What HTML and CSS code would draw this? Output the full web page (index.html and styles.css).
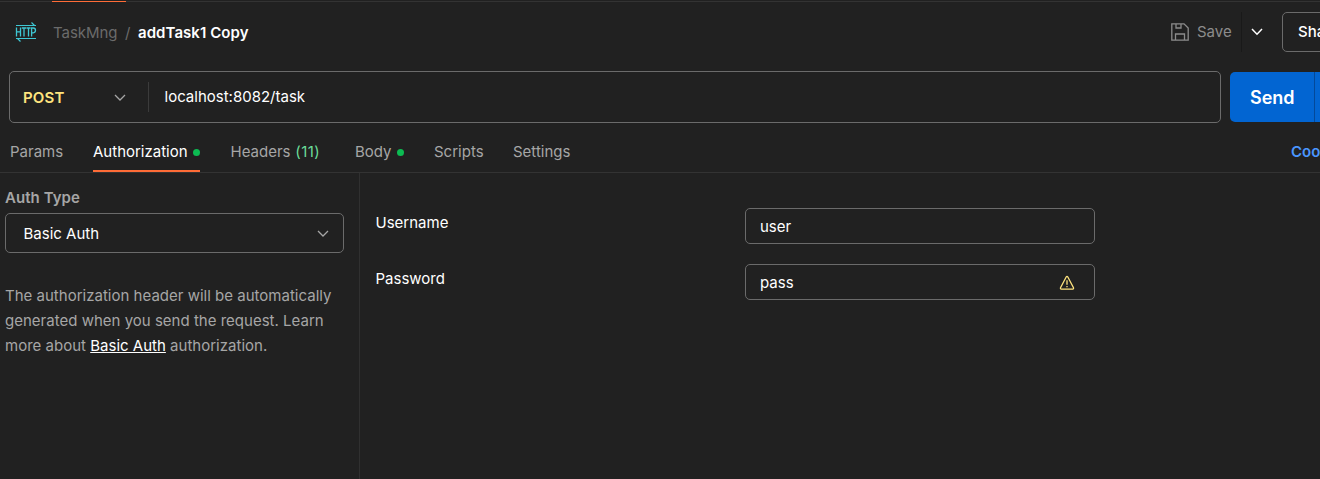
FILE: index.html
```
<!DOCTYPE html>
<html lang="en">
<head>
<meta charset="utf-8">
<title>addTask1 Copy</title>
<link rel="stylesheet" href="styles.css">
</head>
<body>
<div class="app">
  <div class="tabstrip"><span class="tabstrip-active"></span></div>
  <header class="header">
    <svg class="http-icon" width="22" height="20" viewBox="0 0 22 20" fill="none" stroke="#3ec8d4">
      <path d="M1 3.5H21M16.5 .5L19.5 3.5M1 16.5H21M5.5 19.5L2.5 16.5" stroke-width="1.2"/>
      <path d="M1.5 5.5V14.5M5.5 5.5V14.5M1.5 9.8H5.5M6.8 6H11.2M9 6V14.5M11.6 6H15.6M13.5 6V14.5M16.6 14.5V6H18.3Q20.5 6 20.5 8.3T18.3 10.8H16.6" stroke-width="1.3"/>
    </svg>
    <span class="crumb">TaskMng</span>
    <span class="slash">/</span>
    <span class="title">addTask1 Copy</span>
    <div class="actions">
      <svg class="save-icon" width="18" height="18" viewBox="0 0 18 18" fill="none" stroke="#8c8c8c" stroke-width="1.3">
        <path d="M.8 .8H13L17.2 5V17.2H.8ZM4.5 17V11H13.5V17M5 1V5H10V1"/>
      </svg>
      <span class="save">Save</span>
      <span class="save-caret"><svg width="12" height="8" viewBox="0 0 12 8" fill="none" stroke="#fff" stroke-width="1.5"><path d="M1 1L6 6.2L11 1"/></svg></span>
      <button class="share">Share</button>
    </div>
  </header>
  <div class="request">
    <div class="urlbar">
      <div class="method"><span>POST</span><svg width="12" height="8" viewBox="0 0 12 8" fill="none" stroke="#a6a6a6" stroke-width="1.3"><path d="M1 1L6 6L11 1"/></svg></div>
      <span class="url">localhost:8082/task</span>
    </div>
    <div class="send"><span class="send-label">Send</span><span class="send-more"></span></div>
  </div>
  <nav class="tabs">
    <span class="tab params">Params</span>
    <span class="tab active auth">Authorization<i class="dot"></i></span>
    <span class="tab headers">Headers <span class="count">(11)</span></span>
    <span class="tab bodytab">Body<i class="dot"></i></span>
    <span class="tab scripts">Scripts</span>
    <span class="tab">Settings</span>
    <span class="cookies">Cookies</span>
  </nav>
  <main class="main">
    <aside class="side">
      <div class="label">Auth Type</div>
      <div class="select"><span>Basic Auth</span><svg width="12" height="8" viewBox="0 0 12 8" fill="none" stroke="#a6a6a6" stroke-width="1.3"><path d="M1 1L6 6L11 1"/></svg></div>
      <p class="help">The authorization header will be automatically<br>generated when you send the request. Learn<br>more about <a class="link">Basic Auth</a> authorization.</p>
    </aside>
    <section class="form">
      <div class="row"><span class="name">Username</span><div class="field">user</div></div>
      <div class="row"><span class="name">Password</span><div class="field">pass
        <svg width="16" height="16" viewBox="0 0 16 16" fill="none" stroke="#ffe47e" stroke-width="1.3"><path d="M7.3 1.8Q8 .8 8.7 1.8L14.5 12.8Q14.8 14.1 13.7 14.2H2.3Q1.2 14.1 1.5 12.8ZM8 5.3V9.8M8 11V12.3"/></svg></div></div>
    </section>
  </main>
</div>
</body>
</html>
```
FILE: styles.css
```
* { box-sizing: border-box; }
body { margin: 0; background: #212121; color: #fff; font: 15px/20px Inter, "Liberation Sans", sans-serif; }
.app { width: 1320px; height: 479px; overflow: hidden; display: flex; flex-direction: column; white-space: nowrap; }
.tabstrip { height: 2px; flex: none; border-bottom: 1px solid #333; padding-left: 52px; }
.tabstrip-active { display: block; width: 74px; height: 2px; background: linear-gradient(#212121 50%, #ff6c37 50%); }
.header { height: 61px; flex: none; display: flex; align-items: center; padding-left: 15px; }
.http-icon { flex: none; margin: 0 16px 2px 0; }
.crumb { width: 72px; color: #6b6b6b; letter-spacing: -0.05px; }
.slash { width: 13px; color: #6b6b6b; }
.title { font-weight: 600; letter-spacing: 0.06px; }
.actions { margin: 0 0 2px auto; width: 149px; height: 40px; display: flex; align-items: center; flex: none; }
.save-icon { flex: none; margin-right: 8px; }
.save { width: 44px; color: #8c8c8c; flex: none; }
.save-caret { width: 41px; height: 40px; flex: none; border-left: 1px solid #191919; display: flex; align-items: center; padding-left: 9px; }
.share { width: 80px; height: 40px; flex: none; padding: 0 0 0 15px; border: 1px solid #6b6b6b; border-radius: 5px; background: none; color: #fff; font: inherit; font-weight: 500; text-align: left; }
.request { display: flex; padding: 8px 0 0 9px; height: 68px; flex: none; }
.urlbar { width: 1212px; height: 52px; flex: none; border: 1px solid #6b6b6b; border-radius: 5px; display: flex; align-items: center; }
.method { width: 139px; height: 30px; flex: none; border-right: 1px solid #3b3b3b; display: flex; align-items: center; justify-content: space-between; padding: 2px 22px 0 13px; color: #ffe47e; font-weight: 600; letter-spacing: 0.15px; }
.url { padding-left: 15.5px; }
.send { margin: 1px 0 0 9px; height: 50px; width: 110px; flex: none; display: flex; background: #0265d2; border-radius: 5px; font-size: 18px; font-weight: 600; align-items: center; }
.send-label { width: 84px; padding: 2px 0 0 20px; }
.send-more { height: 50px; border-left: 1px solid #03499a; }
.tabs { height: 42px; flex: none; display: flex; border-bottom: 1px solid #333; padding-left: 10px; color: #a6a6a6; }
.tab { height: 41px; padding-top: 11px; margin-right: 30px; }
.params { width: 53px; }
.auth { width: 107px; }
.headers { width: 95px; }
.bodytab { width: 49px; }
.scripts { width: 49px; }
.active { color: #fff; border-bottom: 2px solid #ff6c37; }
.dot { display: inline-block; width: 7px; height: 7px; border-radius: 50%; background: #0cbb52; margin-left: 5px; vertical-align: 1px; }
.headers { padding-left: 0.5px; }
.count { color: #6bdd9a; margin-left: 0.5px; letter-spacing: 0.5px; }
.cookies { margin-left: auto; padding-top: 11px; width: 29px; color: #4a96ff; font-weight: 600; }
.main { flex: 1; display: flex; }
.side { width: 360px; flex: none; border-right: 1px solid #303030; padding: 15px 15px 0 5px; color: #a6a6a6; }
.label { font-weight: 600; height: 25px; letter-spacing: 0.06px; }
.select { height: 40px; border: 1px solid #6b6b6b; border-radius: 5px; display: flex; align-items: center; justify-content: space-between; padding: 1px 14px 0 17.5px; color: #fff; }
.select span { padding-top: 1px; }
.help { margin: 30px 0 0; line-height: 25px; letter-spacing: 0.01px; }
.link { color: #fff; text-decoration: underline; }
.form { padding: 35px 0 0 15.5px; }
.row { display: flex; height: 56px; }
.name { width: 369.5px; padding-top: 5px; }
.field { width: 350px; height: 36px; border: 1px solid #6b6b6b; border-radius: 5px; padding: 2px 19px 0 14px; display: flex; align-items: center; justify-content: space-between; }
```
